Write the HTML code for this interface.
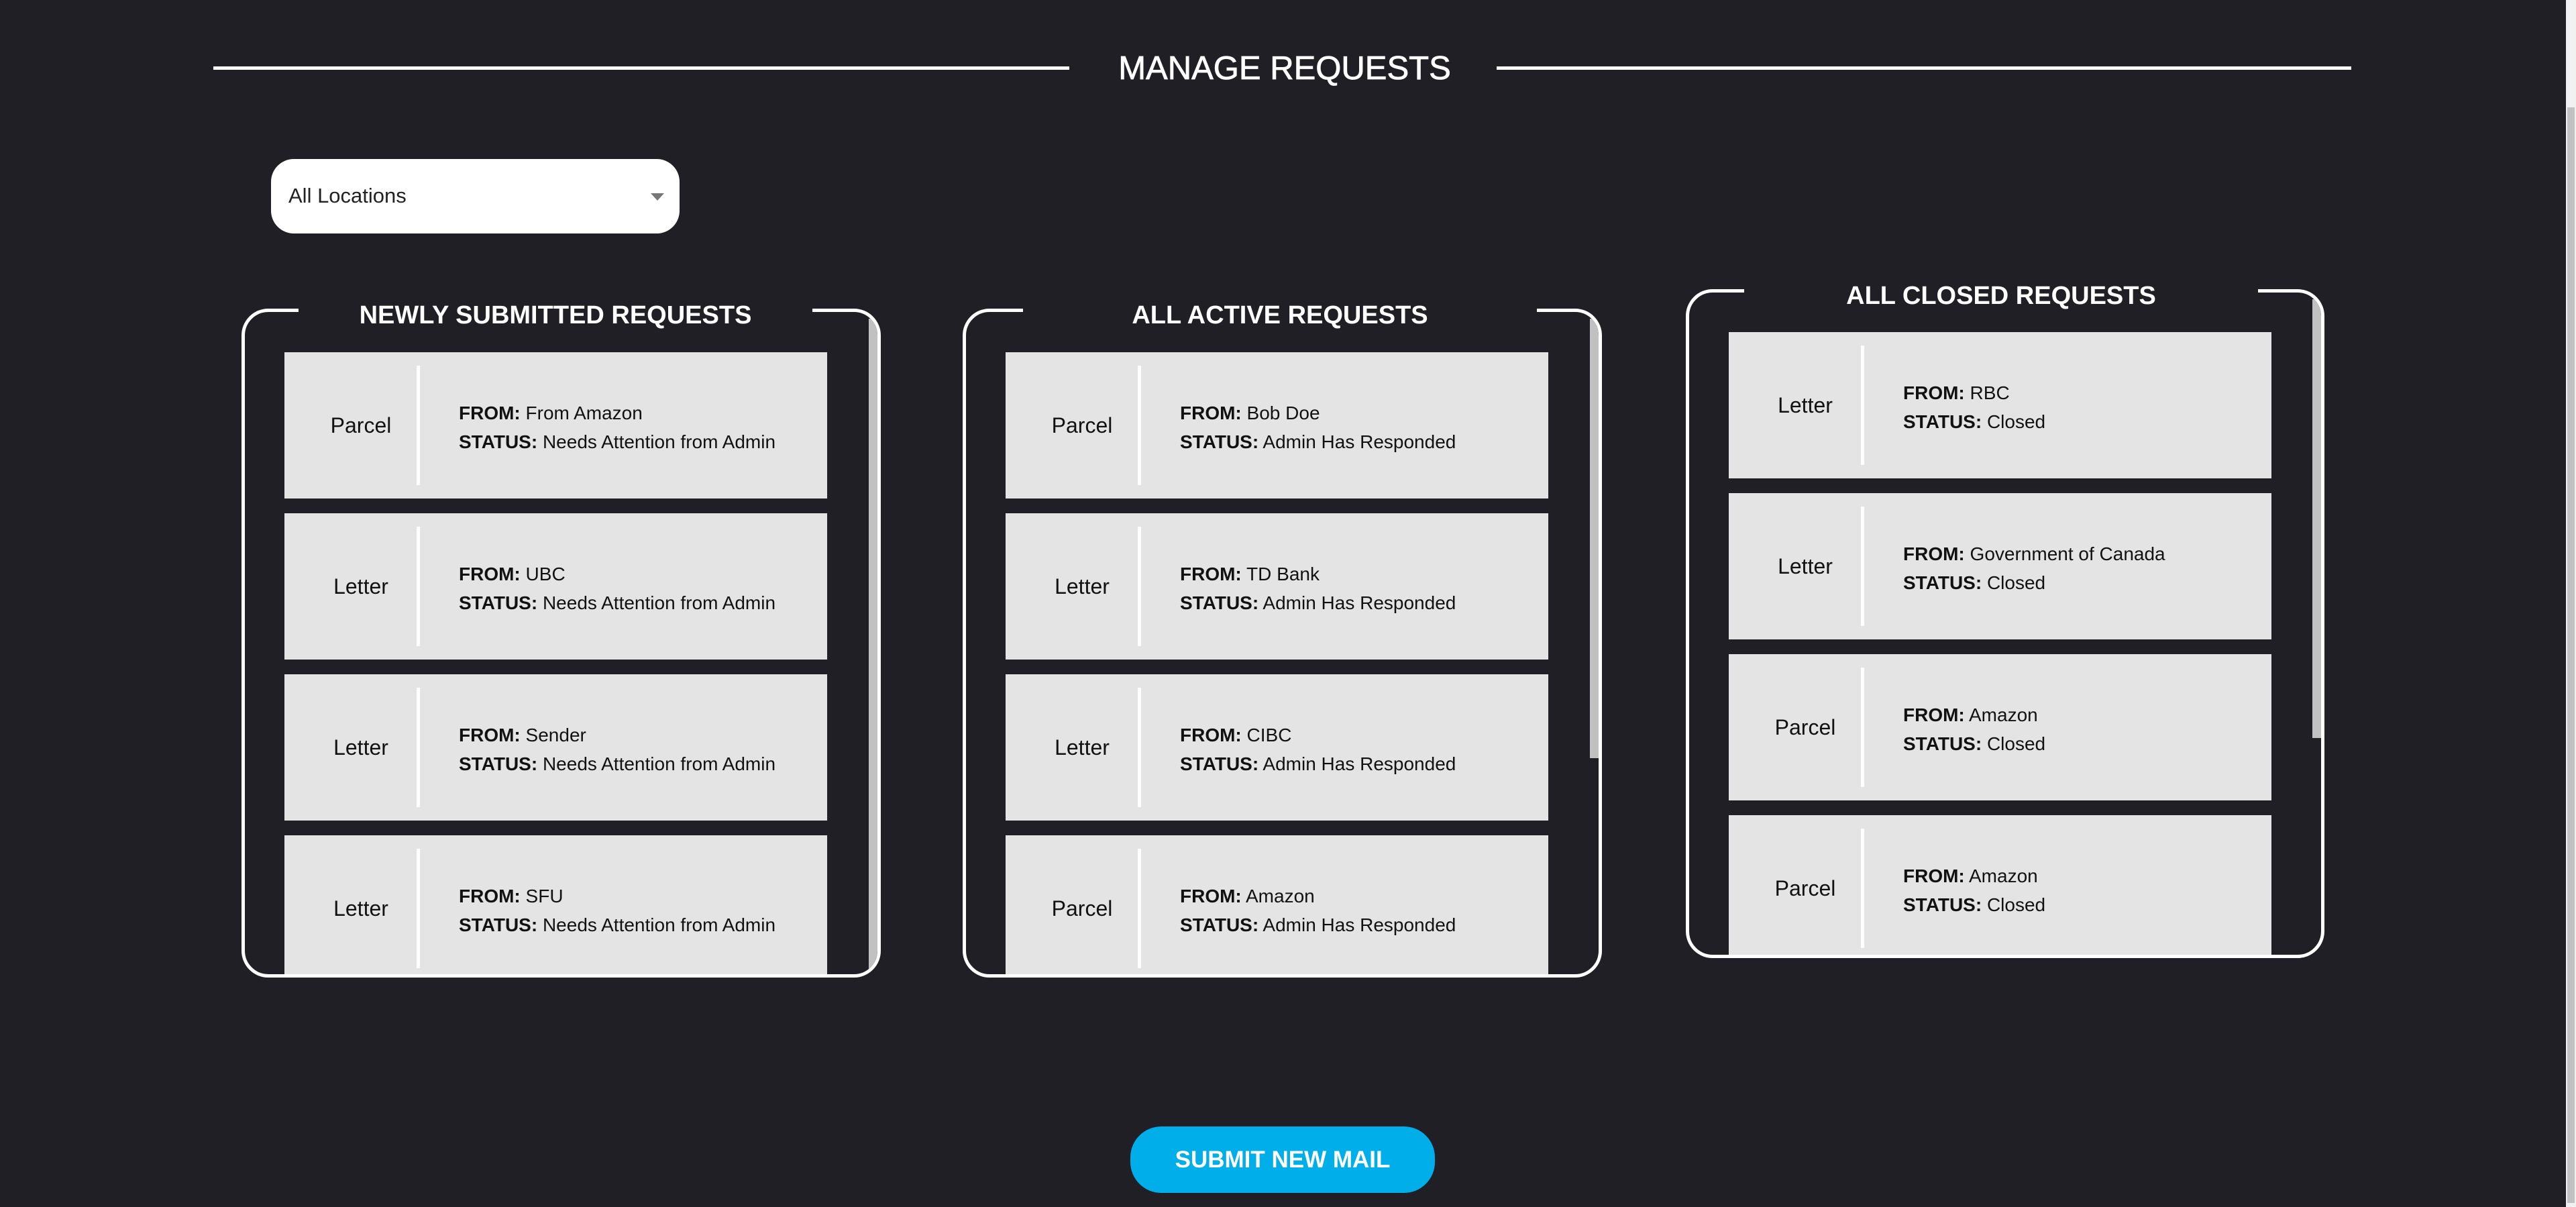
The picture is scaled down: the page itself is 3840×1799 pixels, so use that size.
<!DOCTYPE html>
<html><head><meta charset="utf-8"><style>
*{margin:0;padding:0;box-sizing:border-box}
html,body{width:3840px;height:1799px;overflow:hidden;background:#201f25;font-family:"Liberation Sans",sans-serif}
.abs{position:absolute}
.hline{position:absolute;height:5px;background:#fff;top:99px}
.title{position:absolute;top:70px;left:1600px;width:630px;text-align:center;color:#fff;font-size:49px;line-height:64px;-webkit-text-stroke:0.8px #fff}
.dd{position:absolute;left:404px;top:237px;width:609px;height:111px;background:#fff;border-radius:34px}
.dd span{position:absolute;left:26px;top:37px;font-size:31px;color:#222}
.dd i{position:absolute;left:566px;top:51px;width:0;height:0;border-left:10px solid transparent;border-right:10px solid transparent;border-top:11px solid #777}
.panel{position:absolute;border:5px solid #fff;border-radius:40px;overflow:hidden}
.ptitle{position:absolute;background:#201f25;color:#fff;font-weight:bold;font-size:38px;text-align:center;line-height:50px;height:30px;overflow:visible}
.ptitle span{position:relative;top:-5px}
.card{position:absolute;left:59px;width:809px;height:218px;background:#e4e4e4}
.card .lab{position:absolute;left:0;width:228px;top:0;line-height:218px;text-align:center;font-size:32px;color:#111}
.card .div{position:absolute;left:197px;top:20px;width:5px;height:178px;background:#fff}
.card .t{position:absolute;left:260px;top:69px;font-size:28px;line-height:43px;color:#111}
.sb{position:absolute;width:14px;background:#c1c1c1}
.btn{position:absolute;left:1685px;top:1679px;width:454px;height:99px;background:#00aeea;border-radius:46px;color:#fff;font-weight:bold;font-size:35px;text-align:center;line-height:99px}
</style></head><body>
<div class="hline" style="left:318px;width:1276px"></div>
<div class="hline" style="left:2231px;width:1274px"></div>
<div class="title">MANAGE REQUESTS</div>
<div class="dd"><span>All Locations</span><i></i></div>

<div class="panel" style="left:360px;top:460px;width:953px;height:997px">
  <div class="card" style="top:60px"><div class="lab">Parcel</div><div class="div"></div><div class="t"><b>FROM:</b> From Amazon<br><b>STATUS:</b> Needs Attention from Admin</div></div>
  <div class="card" style="top:300px"><div class="lab">Letter</div><div class="div"></div><div class="t"><b>FROM:</b> UBC<br><b>STATUS:</b> Needs Attention from Admin</div></div>
  <div class="card" style="top:540px"><div class="lab">Letter</div><div class="div"></div><div class="t"><b>FROM:</b> Sender<br><b>STATUS:</b> Needs Attention from Admin</div></div>
  <div class="card" style="top:780px"><div class="lab">Letter</div><div class="div"></div><div class="t"><b>FROM:</b> SFU<br><b>STATUS:</b> Needs Attention from Admin</div></div>
  <div class="sb" style="left:930px;top:10px;height:975px"></div>
</div>
<div class="ptitle" style="left:445px;top:450px;width:766px"><span>NEWLY SUBMITTED REQUESTS</span></div>

<div class="panel" style="left:1435px;top:460px;width:953px;height:997px">
  <div class="card" style="top:60px"><div class="lab">Parcel</div><div class="div"></div><div class="t"><b>FROM:</b> Bob Doe<br><b>STATUS:</b> Admin Has Responded</div></div>
  <div class="card" style="top:300px"><div class="lab">Letter</div><div class="div"></div><div class="t"><b>FROM:</b> TD Bank<br><b>STATUS:</b> Admin Has Responded</div></div>
  <div class="card" style="top:540px"><div class="lab">Letter</div><div class="div"></div><div class="t"><b>FROM:</b> CIBC<br><b>STATUS:</b> Admin Has Responded</div></div>
  <div class="card" style="top:780px"><div class="lab">Parcel</div><div class="div"></div><div class="t"><b>FROM:</b> Amazon<br><b>STATUS:</b> Admin Has Responded</div></div>
  <div class="sb" style="left:930px;top:10px;height:655px"></div>
</div>
<div class="ptitle" style="left:1525px;top:450px;width:766px"><span>ALL ACTIVE REQUESTS</span></div>

<div class="panel" style="left:2513px;top:431px;width:952px;height:997px">
  <div class="card" style="top:59px"><div class="lab">Letter</div><div class="div"></div><div class="t"><b>FROM:</b> RBC<br><b>STATUS:</b> Closed</div></div>
  <div class="card" style="top:299px"><div class="lab">Letter</div><div class="div"></div><div class="t"><b>FROM:</b> Government of Canada<br><b>STATUS:</b> Closed</div></div>
  <div class="card" style="top:539px"><div class="lab">Parcel</div><div class="div"></div><div class="t"><b>FROM:</b> Amazon<br><b>STATUS:</b> Closed</div></div>
  <div class="card" style="top:779px"><div class="lab">Parcel</div><div class="div"></div><div class="t"><b>FROM:</b> Amazon<br><b>STATUS:</b> Closed</div></div>
  <div class="sb" style="left:929px;top:10px;height:654px"></div>
</div>
<div class="ptitle" style="left:2600px;top:421px;width:766px"><span>ALL CLOSED REQUESTS</span></div>

<div class="btn">SUBMIT NEW MAIL</div>

<div class="abs" style="left:3825px;top:0;width:15px;height:1799px;background:#f1f1f1"></div>
<div class="abs" style="left:3827px;top:160px;width:11px;height:1633px;background:#c1c1c1"></div>
</body></html>
